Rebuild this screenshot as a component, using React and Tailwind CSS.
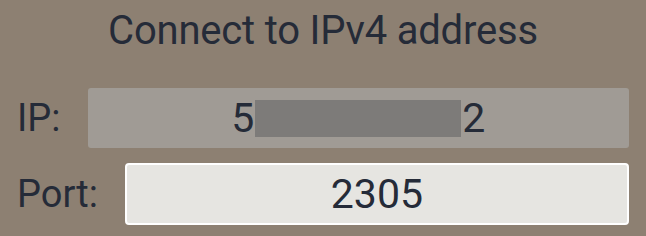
import React from 'react';

const App = () => {
  return (
    <div className="w-[646px] h-[236px] bg-[#8d8072] text-[#252b38] font-['Roboto',sans-serif] flex flex-col px-[17px]">
      <h1 className="text-center text-[40px] leading-none mt-[11px] tracking-[-0.2px]">Connect to IPv4 address</h1>

      <div className="flex items-center gap-[27px] mt-[37px]">
        <span className="text-[38px] leading-none">IP:</span>
        <div className="flex-1 h-[60px] bg-[#a09b95] rounded-[3px] flex items-center justify-center text-[41px] leading-none">
          <span>5</span>
          <span className="w-[206px] h-[37px] bg-[#7d7b79] mx-[1px]" />
          <span>2</span>
        </div>
      </div>

      <div className="flex items-center gap-[27px] mt-[15px]">
        <span className="text-[38px] leading-none">Port:</span>
        <div className="flex-1 h-[62px] bg-[#e6e5e1] border-2 border-white rounded-[4px] flex items-center justify-center text-[41px] leading-none">
          2305
        </div>
      </div>
    </div>
  );
};

export default App;
